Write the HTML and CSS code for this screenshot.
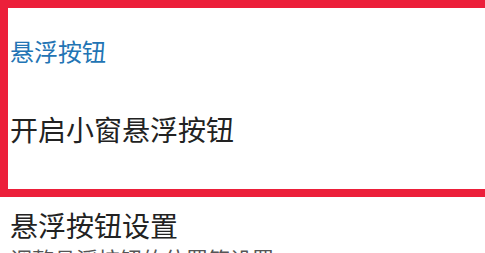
FILE: index.html
```html
<!DOCTYPE html>
<html lang="zh-CN">
<head>
<meta charset="utf-8">
<link rel="stylesheet" href="styles.css">
</head>
<body>
<div class="page">
  <section class="highlight">
    <div class="group-title">悬浮按钮</div>
    <div class="item-title">开启小窗悬浮按钮</div>
  </section>
  <section class="item">
    <div class="item-title">悬浮按钮设置</div>
    <div class="item-desc">调整悬浮按钮的位置等设置</div>
  </section>
</div>
</body>
</html>
```

FILE: styles.css
```css
html, body {
  margin: 0;
  padding: 0;
  background: #ffffff;
}
.page {
  width: 485px;
  height: 253px;
  overflow: hidden;
  font-family: "Noto Sans CJK SC", "Noto Sans", sans-serif;
}
.highlight {
  box-sizing: border-box;
  width: 520px;
  height: 197px;
  border: 8px solid #ec1f3a;
  padding: 28px 0 0 2px;
}
.group-title {
  font-size: 24px;
  line-height: 30px;
  color: #2274b4;
}
.item-title {
  font-size: 28px;
  line-height: 36px;
  color: #222222;
}
.highlight .item-title {
  margin-top: 45px;
}
.item {
  padding: 10px 0 0 10px;
}
.item-desc {
  font-size: 22px;
  line-height: 30px;
  color: #555555;
}
```
